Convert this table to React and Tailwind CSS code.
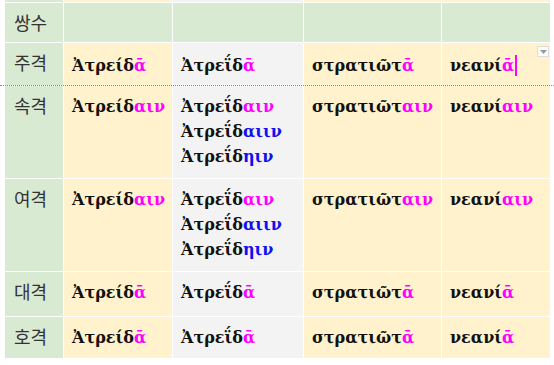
import React from "react";

const M = ({ children }) => <span className="text-[#ff00ff]">{children}</span>;
const B = ({ children }) => <span className="text-[#1010f0]">{children}</span>;

const greek = "font-['DejaVu_Serif','Liberation_Serif',serif] font-bold text-[16px] leading-[25px] text-[#111]";
const kor = "font-['Noto_Sans_CJK_KR','Noto_Sans',sans-serif] text-[18px] leading-[25px] text-[#333]";

const cols = "grid grid-cols-[58px_108px_130px_137px_108px] gap-x-px";

function Cell({ bg, children, extra = "" }) {
  return <div className={`${bg} ${greek} pl-[8px] pt-[8px] ${extra}`}>{children}</div>;
}

function Row({ label, h, cells }) {
  return (
    <div className={`${cols}`} style={{ height: h }}>
      <div className={`bg-[#d9ead3] ${kor} pl-[9px] pt-[7px]`}>{label}</div>
      <Cell bg="bg-[#fff2cc]">{cells[0]}</Cell>
      <Cell bg="bg-[#f3f3f3]">{cells[1]}</Cell>
      <Cell bg="bg-[#fff2cc]">{cells[2]}</Cell>
      <Cell bg="bg-[#fff2cc]">{cells[3]}</Cell>
    </div>
  );
}

const A1 = "Ἀτρείδ";
const A2 = "Ἀτρεΐδ";
const S = "στρατιῶτ";
const N = "νεανί";

const multi = (
  <div className="flex flex-col">
    <div>{A2}<M>αιν</M></div>
    <div>{A2}<B>αιιν</B></div>
    <div>{A2}<B>ηιν</B></div>
  </div>
);

export default function App() {
  return (
    <div className="w-[554px] h-[365px] bg-white overflow-hidden">
      <div className="pl-[5px] flex flex-col gap-y-px">
        <div className={cols} style={{ height: 2 }}>
          <div className="bg-[#d9ead3]" />
          <div className="bg-[#fff2cc]" />
          <div className="bg-[#f3f3f3]" />
          <div className="bg-[#fff2cc]" />
          <div className="bg-[#fff2cc]" />
        </div>
        <div className={cols} style={{ height: 39 }}>
          <div className={`bg-[#d9ead3] ${kor} pl-[9px] pt-[7px]`}>쌍수</div>
          <div className="bg-[#d9ead3]" />
          <div className="bg-[#d9ead3]" />
          <div className="bg-[#d9ead3]" />
          <div className="bg-[#d9ead3]" />
        </div>
        <div className={cols} style={{ height: 42 }}>
          <div className={`bg-[#d9ead3] ${kor} pl-[9px] pt-[7px]`}>주격</div>
          <Cell bg="bg-[#fff2cc]" extra="pt-[10px]">{A1}<M>ᾱ</M></Cell>
          <Cell bg="bg-[#f3f3f3]" extra="pt-[10px]">{A2}<M>ᾱ</M></Cell>
          <Cell bg="bg-[#fff2cc]" extra="pt-[10px]">{S}<M>ᾱ</M></Cell>
          <Cell bg="bg-[#fff2cc]" extra="pt-[10px] relative">
            <span className="inline-flex items-center">
              {N}<M>ᾱ</M>
              <span className="inline-block w-[2px] h-[21px] bg-[#ff00ff] ml-px" />
            </span>
            <span className="absolute right-[1px] top-[3px] w-[12px] h-[11px] bg-[#fafafa] border border-[#dddddd] flex items-center justify-center">
              <svg width="7" height="4" viewBox="0 0 7 4"><path d="M0 0h7L3.5 4z" fill="#999" /></svg>
            </span>
          </Cell>
        </div>
      </div>
      <div className="h-px border-t border-dotted border-[#888]" />
      <div className="pl-[5px] flex flex-col gap-y-px">
        <Row label="속격" h={92} cells={[<>{A1}<M>αιν</M></>, multi, <>{S}<M>αιν</M></>, <>{N}<M>αιν</M></>]} />
        <Row label="여격" h={92} cells={[<>{A1}<M>αιν</M></>, multi, <>{S}<M>αιν</M></>, <>{N}<M>αιν</M></>]} />
        <Row label="대격" h={44} cells={[<>{A1}<M>ᾱ</M></>, <>{A2}<M>ᾱ</M></>, <>{S}<M>ᾱ</M></>, <>{N}<M>ᾱ</M></>]} />
        <Row label="호격" h={41} cells={[<>{A1}<M>ᾱ</M></>, <>{A2}<M>ᾱ</M></>, <>{S}<M>ᾱ</M></>, <>{N}<M>ᾱ</M></>]} />
      </div>
    </div>
  );
}
